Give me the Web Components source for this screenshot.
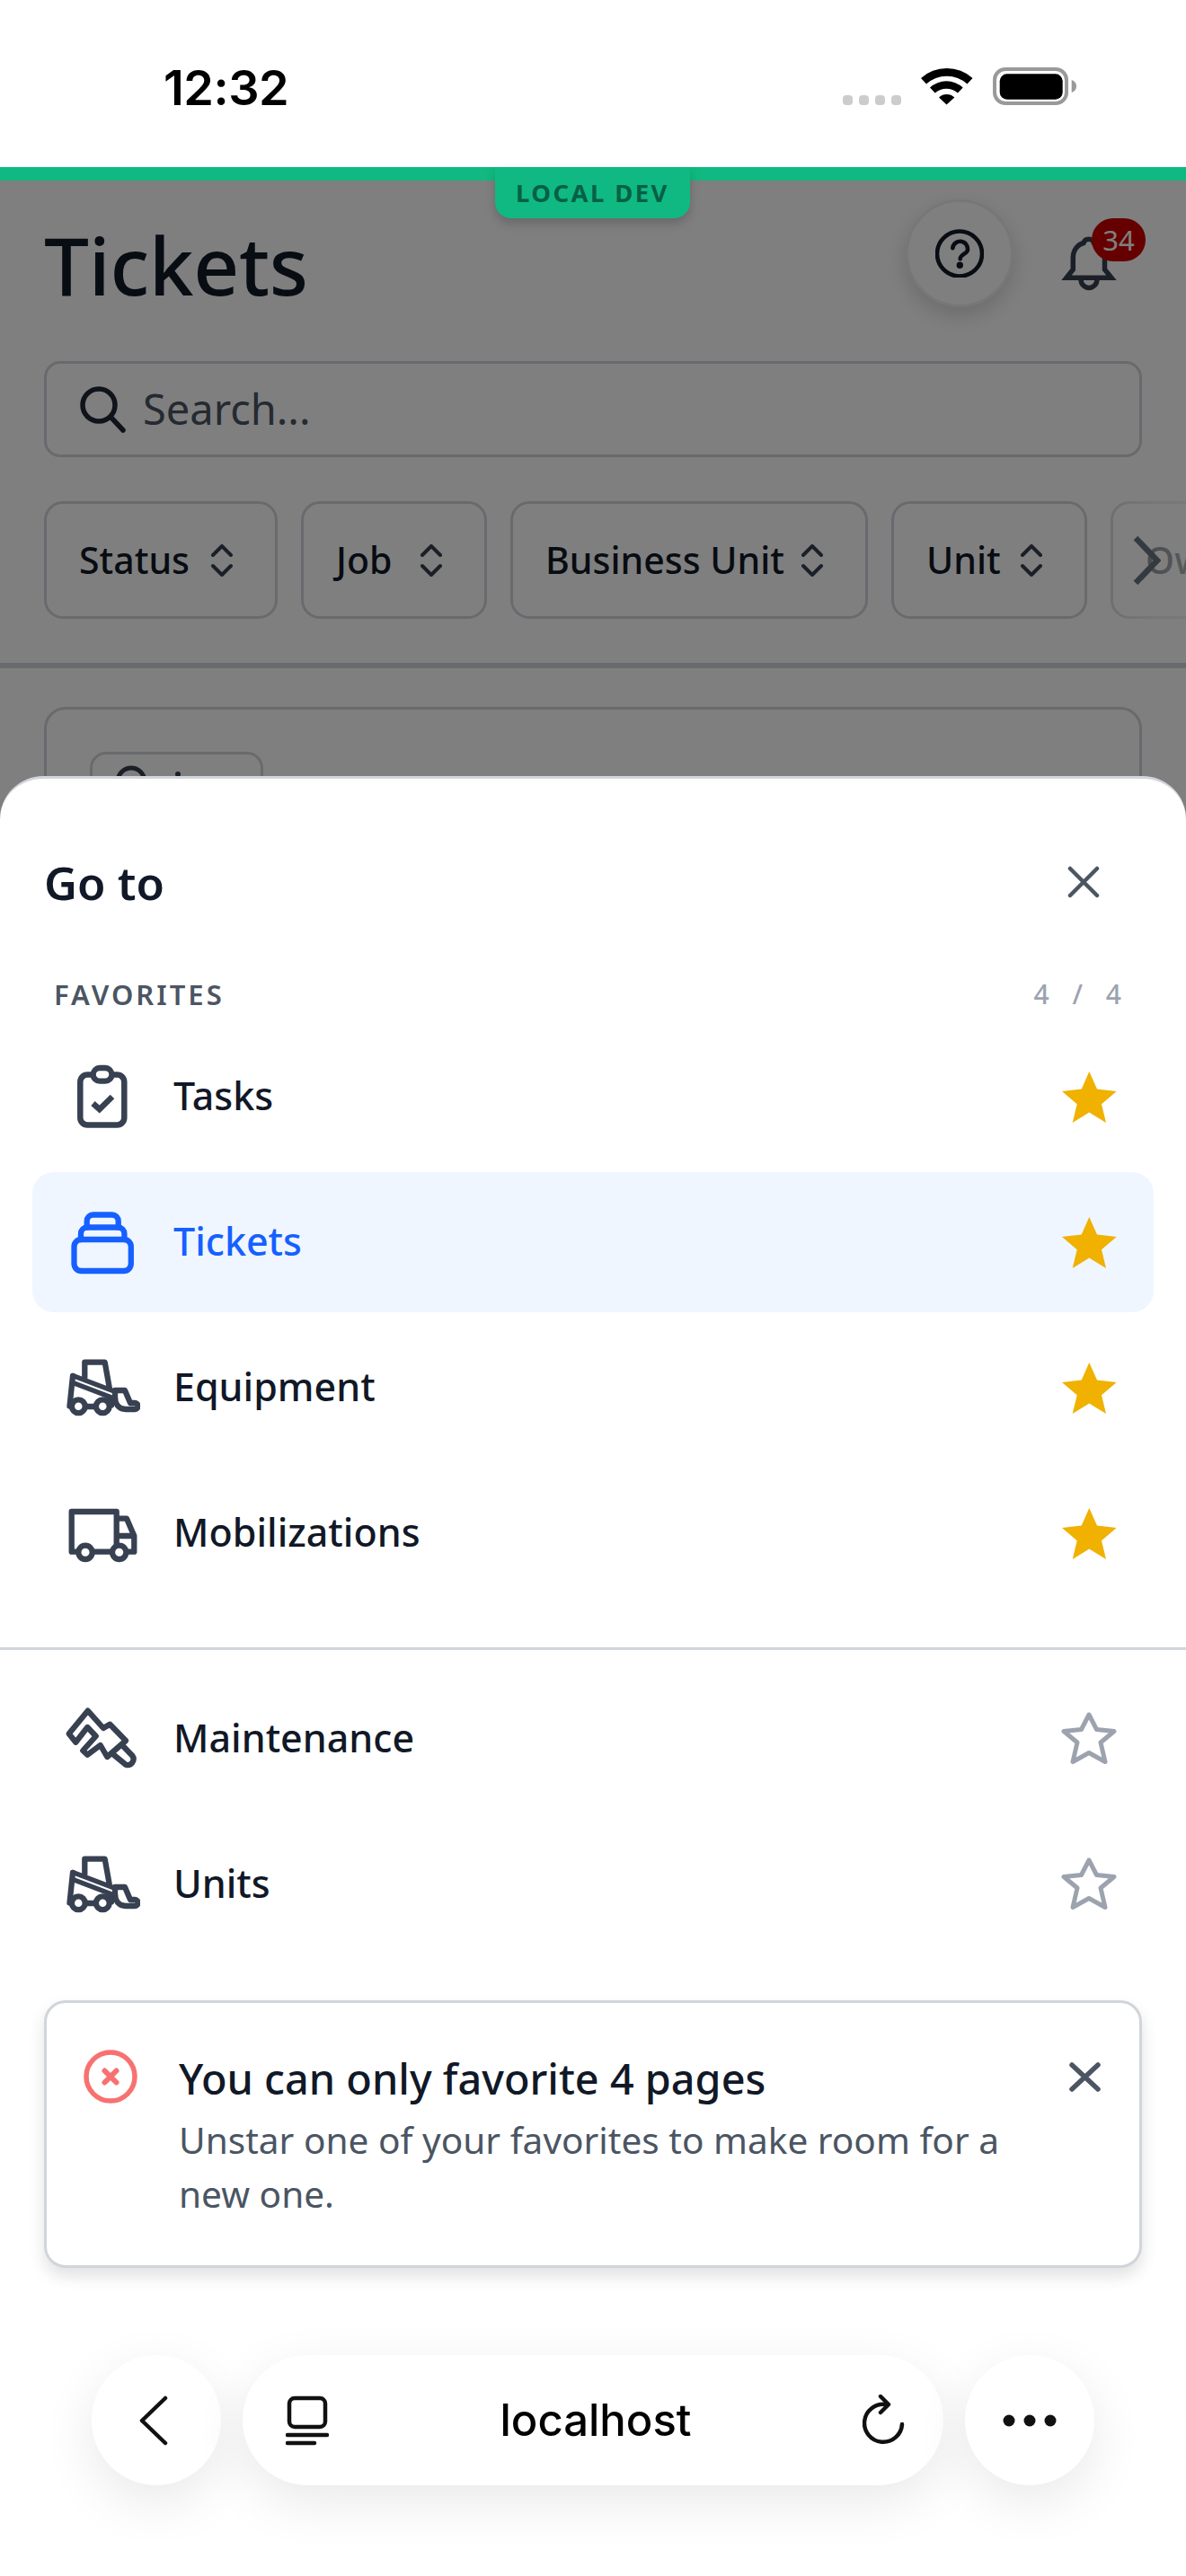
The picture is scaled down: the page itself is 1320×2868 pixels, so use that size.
<!DOCTYPE html>
<html lang="en"><head><meta charset="utf-8"><title>Tickets</title>
<style>
html,body{margin:0;padding:0;background:#fff}
body{font-family:"Noto Sans","Inter",sans-serif;width:1320px;height:2868px;overflow:hidden}
</style></head><body>
<app-shell>
  <status-bar></status-bar>
  <env-banner>LOCAL DEV</env-banner>
  <tickets-page></tickets-page>
  <goto-sheet></goto-sheet>
  <browser-bar></browser-bar>
</app-shell>
<script>
const FONT='"Noto Sans","Inter",sans-serif';
const ICONS={
 tasks:`<rect x="17.300" y="17.500" width="49" height="56" rx="8" stroke-width="6.500"/><rect x="31.700" y="10" width="20.700" height="14.700" rx="7.300" fill="var(--fill,#fff)"/><path d="M31.500 49.500L38.700 56 53 42" stroke-linecap="butt" stroke-linejoin="miter" stroke-width="6.500"/>`,
 tickets:`<rect x="10.500" y="39" width="63.300" height="35" rx="8"/><path d="M18 39v-6.500a7 7 0 0 1 7-7h34.400a7 7 0 0 1 7 7V39"/><path d="M24.700 25.500v-7a7 7 0 0 1 7-7h21a7 7 0 0 1 7 7v7"/>`,
 equipment:`<path d="M22.300 30.300V13.700h22.400l5 28"/><g stroke-width="5.300"><path d="M9 28.500L53 45.300"/><path d="M10.500 37L50.500 52.300"/></g><path d="M9 29L5.500 62.500"/><path d="M25 63h9"/><path d="M51 53.500l1 8"/><circle cx="15.300" cy="62.700" r="7.400" fill="var(--fill,#fff)"/><circle cx="42.300" cy="62.700" r="7.400" fill="var(--fill,#fff)"/><path d="M56 45h11l6 14h5a3.500 3.500 0 0 1 0 7H68C60 66 56 60 56 52z"/>`,
 truck:`<path d="M13 62.700H7.700V18H57.700V60"/><path d="M30 62.700H53"/><path d="M60.700 25.700H69L77.300 45V62.700H69"/><path d="M60.700 45H77"/><circle cx="23" cy="63.300" r="7.700" fill="var(--fill,#fff)"/><circle cx="60.700" cy="63.300" r="7.700" fill="var(--fill,#fff)"/>`,
 wrench:`<path d="M4.700 36.300L25.700 10.700 43 30 50.300 25.700 68 44 47.300 62 39.700 49 25.300 59.700 20.300 55 34.700 39 25.300 29 12.300 45.700z"/><path d="M64 49L75.300 60.700a6.500 6.500 0 0 1-7.300 10L53.700 59"/>`
};
function def(name,html){customElements.define(name,class extends HTMLElement{
  connectedCallback(){if(this.shadowRoot)return;const s=this.attachShadow({mode:'open'});s.innerHTML=typeof html==='function'?html(this):html;}
});}
const iconSvg=(n,c)=>`<svg width="84" height="84" viewBox="0 0 84 84" fill="none" stroke="${c}" stroke-width="6.300" stroke-linecap="round" stroke-linejoin="round">${ICONS[n]}</svg>`;

def('app-shell',`<style>:host{display:block;position:relative;width:1320px;height:2868px;overflow:hidden;background:#fff}</style><slot></slot>`);

def('status-bar',`<style>
:host{display:flex;height:186px;padding:0 121px 0 182px;box-sizing:border-box;align-items:flex-start;justify-content:space-between;background:#fff;color:#000}
.t{font:600 54px/1 "Inter",sans-serif;margin-top:71px;letter-spacing:-.5px}
.r{display:flex;align-items:flex-end;gap:22px;margin-top:75px;height:42px}
.d{display:flex;gap:7px;height:11px}.d i{width:11px;height:11px;border-radius:4px;background:#ccc;display:block}
</style>
<div class="t">12:32</div><div class="r"><div class="d"><i></i><i></i><i></i><i></i></div>
<svg width="58" height="43" viewBox="0 0 58 43" fill="#000"><path d="M0 13A43 43 0 0 1 57.500 13L51.500 19.500A34 34 0 0 0 6 19.500z"/><path d="M10 23.500A27 27 0 0 1 46.700 23.500L41 29.500A19 19 0 0 0 15.700 29.500z"/><path d="M20 34.500A12.500 12.500 0 0 1 37.300 34.500L28.500 42.500z"/></svg>
<svg width="94" height="42" viewBox="0 0 94 42"><rect x="2" y="2" width="80" height="38" rx="12" fill="#fff" stroke="#999" stroke-width="4"/><rect x="7.700" y="7.300" width="70" height="28.400" rx="8" fill="#000"/><path d="M87.700 14c3 1 5.300 3.500 5.300 7s-2.300 6-5.300 7z" fill="#999"/></svg>
</div>`);

def('env-banner',`<style>
:host{display:block;height:15px;background:#10b981;position:relative;z-index:3}
.tab{position:absolute;left:551px;top:0;width:217px;height:57px;background:#10b981;border-radius:0 0 18px 18px;box-shadow:0 6px 12px rgba(0,0,0,.18);display:flex;align-items:flex-start;justify-content:center;box-sizing:border-box;padding-top:11px;color:#065f46;font:700 27.500px/36px ${FONT};letter-spacing:2.400px}
</style><div class="tab"><slot></slot></div>`);

def('filter-chip',h=>`<style>
:host{display:inline-flex;flex:none;align-items:center;justify-content:space-between;box-sizing:border-box;width:${h.getAttribute('w')}px;height:131px;padding:0 46px 0 36px;border:3px solid #d1d5db;border-radius:21px;font:500 41px/1 ${FONT};color:#111827;background:#fff}
</style><span><slot></slot></span><svg width="26" height="36" viewBox="0 0 26 36" fill="none" stroke="#374151" stroke-width="4" stroke-linecap="round" stroke-linejoin="round"><path d="M3 12L13 2l10 10M3 24l10 10 10-10"/></svg>`);

def('tickets-page',`<style>
:host{display:block;position:relative;height:2667px;background:#fff;box-sizing:border-box;padding:0 0 0 49px;overflow:hidden}
.head{display:flex;align-items:flex-start;height:201px}
h1{margin:38px 0 0;font:500 89px/112px ${FONT};color:#111827;flex:1;letter-spacing:-.3px}
.help{margin-top:21px;width:120px;height:120px;box-sizing:border-box;border-radius:50%;border:3px solid #eceef1;display:flex;align-items:center;justify-content:center;box-shadow:0 9px 24px rgba(0,0,0,.16);background:#fff}
.bell{position:relative;width:84px;height:84px;margin:50px 66px 0 42px}
.badge{position:absolute;left:45px;top:-8px;width:60px;height:48px;border-radius:24px;background:#cc0000;color:#fff;font:400 31px/48px ${FONT};text-align:center}
.search{width:1222px;height:107px;box-sizing:border-box;border:3px solid #d1d5db;border-radius:18px;display:flex;align-items:center;gap:17px;padding:0 36px;font:400 47px/1 ${FONT};color:#4b5563}
.chips{display:flex;gap:26px;margin-top:49px;width:1500px;position:relative}
.fade{position:absolute;left:1185px;top:-5px;width:135px;height:141px;background:linear-gradient(90deg,rgba(255,255,255,.2),rgba(255,255,255,.55) 30%,rgba(255,255,255,.8));display:flex;align-items:center;pointer-events:none}
hr{border:0;height:6px;background:#d1d5db;margin:49px 0 0 -49px;width:1320px}
.card{margin-top:43px;width:1222px;height:600px;box-sizing:border-box;border:3px solid #d1d5db;border-radius:24px;padding:47px 48px}
.pill{width:193px;height:90px;box-sizing:border-box;border:3px solid #d1d5db;border-radius:18px;position:relative}
.pill svg{position:absolute;left:25px;top:12px}
.dim{position:absolute;inset:0;background:rgba(0,0,0,.5)}
</style>
<div class="head"><h1>Tickets</h1>
<div class="help"><svg width="54" height="54" viewBox="0 0 54 54" fill="none" stroke="#111827" stroke-width="4.600" stroke-linecap="round"><circle cx="27" cy="27.500" r="25"/><path d="M19.300 21.300a8.300 8.300 0 0 1 16.700 1.700c0 4.500-8.300 5-8.300 10.300"/><circle cx="27.300" cy="40.300" r="1.400" fill="#111827"/></svg></div>
<div class="bell"><svg width="84" height="84" viewBox="0 0 84 84" fill="none" stroke="#374151" stroke-width="5.500" stroke-linejoin="miter"><path d="M17 58.300L24.300 49V36C24.300 27 30 21 36 19.500a6 6 0 0 1 11.500 0C54 21 59.500 27 59.500 36V49L67 58.300z"/><path d="M33 60a9 9.500 0 0 0 18 0"/></svg><div class="badge">34</div></div></div>
<div class="search"><svg width="54" height="52" viewBox="0 0 54 52" fill="none" stroke="#1f2937" stroke-width="5.500" stroke-linecap="round"><circle cx="22" cy="21" r="18"/><path d="M35 34l14 15"/></svg><span>Search...</span></div>
<div class="chips"><filter-chip w="260">Status</filter-chip><filter-chip w="207">Job</filter-chip><filter-chip w="398">Business Unit</filter-chip><filter-chip w="218">Unit</filter-chip><filter-chip w="218">Owner</filter-chip>
<div class="fade"><svg width="32" height="56" viewBox="0 0 32 56" fill="none" stroke="#6b7280" stroke-width="6.500" stroke-linejoin="miter" style="margin-left:26px"><path d="M4 3l24 25L4 53"/></svg></div></div>
<hr>
<div class="card"><div class="pill"><svg width="74" height="36" viewBox="0 0 74 36" fill="none" stroke="#374151" stroke-width="5"><circle cx="18" cy="18" r="15"/><circle cx="70" cy="10" r="3" fill="#374151" stroke="none"/></svg></div></div>
<div class="dim"></div>`);

def('nav-row',h=>{const on=h.hasAttribute('selected'),fav=h.hasAttribute('fav');
return `<style>
:host{display:flex;align-items:center;height:156px;box-sizing:border-box;padding:0 41px 0 36px;border-radius:24px;${on?'background:#eff6ff;--fill:#eff6ff;':''}}
.l{flex:1;margin:-4px 0 0 37px;font:500 43px/1 ${FONT};color:${on?'#1660ff':'#111827'}}
</style>${iconSvg(h.getAttribute('icon'),on?'#1660ff':'#374151')}<span class="l"><slot></slot></span>
${fav?`<svg width="61" height="57" viewBox="0 0 61 57"><path d="M30.300 0L39 19.500 60.700 22 44 36.200 49 57 30.300 45.600 11.700 57 16.700 36.200 0 22 21.700 19.500z" fill="#f0b100"/></svg>`
:`<svg width="62" height="60" viewBox="0 0 62 60" fill="none" stroke="#9ca3af" stroke-width="5" stroke-linejoin="round"><path d="M31 3l8.500 16.500L59 21.500 44 34l5 21.500-18-10-18 10 5-21.500L3 21.500l19.500-2z"/></svg>`}`;});

def('alert-toast',`<style>
:host{display:flex;box-sizing:border-box;width:1222px;height:298px;margin:51px 0 0 49px;border:3px solid #d1d5db;border-radius:24px;background:#fff;box-shadow:0 9px 18px rgba(0,0,0,.12);padding:54px 43px 0 41px;position:relative}
.b{margin-left:46px;flex:1}
.t{font:500 46.800px/66px ${FONT};color:#111827;margin-top:-3px}
.d{font:400 40.600px/60px ${FONT};color:#4b5563;margin-top:6px;width:960px}
svg.c{margin-top:-2px;flex:none}
svg.x{flex:none;margin-top:12px}
</style>
<svg class="c" width="60" height="60" viewBox="0 0 60 60" fill="none" stroke="#f87171" stroke-width="5.500"><circle cx="30" cy="30" r="27"/><path d="M23.500 23.500l13 13M36.500 23.500l-13 13" stroke-width="6" stroke-linecap="round"/></svg>
<div class="b"><div class="t">You can only favorite 4 pages</div><div class="d">Unstar one of your favorites to make room for a new one.</div></div>
<svg class="x" width="35" height="33" viewBox="0 0 35 33" fill="none" stroke="#4b5563" stroke-width="5.500" stroke-linecap="round"><path d="M3 3l29 27M32 3L3 30"/></svg>`);

def('goto-sheet',`<style>
:host{display:block;position:absolute;left:0;right:0;top:864px;bottom:0;background:#fff;border-radius:48px 48px 0 0;border-top:3px solid #d1d5db;box-sizing:border-box;z-index:2}
.h{display:flex;align-items:center;justify-content:space-between;padding:82px 96px 0 49px;height:66px}
.h b{font:600 51px/66px ${FONT};color:#111827}
.s{display:flex;justify-content:space-between;align-items:center;padding:0 72px 0 60px;margin-top:68px;height:48px}
.s span{font:600 31px/48px ${FONT};letter-spacing:3px;color:#4b5563}
.s i{font:500 30px/48px ${FONT};font-style:normal;letter-spacing:9px;color:#9ca3af;margin-right:-9px}
.rows{display:flex;flex-direction:column;gap:6px;margin:12px 36px 0}
hr{border:0;height:3px;background:#d1d5db;margin:49px 0 0}
.rows.b{margin-top:21px}
</style>
<div class="h"><b>Go to</b><svg width="36" height="36" viewBox="0 0 36 36" fill="none" stroke="#4b5563" stroke-width="4.500" stroke-linecap="round"><path d="M3 3l30 30M33 3L3 33"/></svg></div>
<div class="s"><span>FAVORITES</span><i>4 / 4</i></div>
<div class="rows"><nav-row icon="tasks" fav>Tasks</nav-row><nav-row icon="tickets" fav selected>Tickets</nav-row><nav-row icon="equipment" fav>Equipment</nav-row><nav-row icon="truck" fav>Mobilizations</nav-row></div>
<hr>
<div class="rows b"><nav-row icon="wrench">Maintenance</nav-row><nav-row icon="equipment">Units</nav-row></div>
<alert-toast></alert-toast>`);

def('browser-bar',`<style>
:host{display:flex;position:absolute;left:102px;top:2622px;width:1116px;height:145px;gap:24px;z-index:4}
div{background:#fff;box-shadow:0 18px 60px rgba(0,0,0,.09);border-radius:73px;display:flex;align-items:center;justify-content:center;height:145px}
.c{width:144px;flex:none}
.u{flex:1;justify-content:space-between;padding:0 42px 0 48px;box-sizing:border-box;font:500 49px/1 "Inter",sans-serif;color:#000}
</style>
<div class="c"><svg width="36" height="56" viewBox="0 0 36 56" fill="none" stroke="#111" stroke-width="4.500" stroke-linecap="round" stroke-linejoin="round" style="margin-right:6px"><path d="M31 3L5 28l26 25"/></svg></div>
<div class="u"><svg width="48" height="56" viewBox="0 0 48 56" fill="none" stroke="#111" stroke-width="4.500" stroke-linecap="round"><rect x="4" y="3" width="40" height="32" rx="6"/><path d="M2 44h44M2 53h30"/></svg><span>localhost</span><svg width="48" height="58" viewBox="0 0 48 58" fill="none" stroke="#111" stroke-width="4.500" stroke-linecap="round" stroke-linejoin="round"><path d="M26 11a21 21 0 1 0 18 22"/><path d="M20 2l9 9-9 9"/></svg></div>
<div class="c"><svg width="60" height="14" viewBox="0 0 60 14" fill="#111"><circle cx="7" cy="7" r="6.500"/><circle cx="30" cy="7" r="6.500"/><circle cx="53" cy="7" r="6.500"/></svg></div>`);
</script>
</body></html>
